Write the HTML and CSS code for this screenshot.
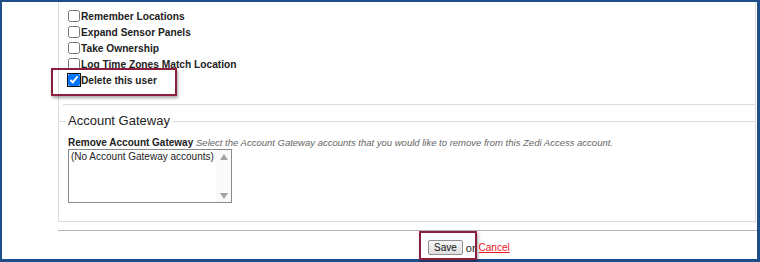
FILE: index.html
```html
<!DOCTYPE html>
<html lang="en">
<head>
    <meta charset="UTF-8">
    <title>Edit User</title>
    <link rel="stylesheet" href="styles.css">
</head>
<body>
    <div class="frame">
        <div class="box">
            <div class="perms">
                <label class="row"><input type="checkbox"> Remember Locations</label>
                <label class="row"><input type="checkbox"> Expand Sensor Panels</label>
                <label class="row"><input type="checkbox"> Take Ownership</label>
                <label class="row"><input type="checkbox"> Log Time Zones Match Location</label>
                <label class="row"><input type="checkbox" class="focused" checked> Delete this user</label>
            </div>
            <fieldset class="gateway">
                <legend>Account Gateway</legend>
                <div class="field-label">
                    <b>Remove Account Gateway</b>
                    <i>Select the Account Gateway accounts that you would like to remove from this Zedi Access account.</i>
                </div>
                <div class="listbox">
                    <div class="list-items">(No Account Gateway accounts)</div>
                    <div class="scroll">
                        <span class="arrow up"></span>
                        <span class="arrow down"></span>
                    </div>
                </div>
            </fieldset>
        </div>
        <div class="actions">
            <button class="save">Save</button>
            <span>or</span>
            <a href="#" class="cancel">Cancel</a>
        </div>
        <!-- annotation boxes -->
        <div class="mark mark-delete"></div>
        <div class="mark mark-save"></div>
    </div>
</body>
</html>
```

FILE: styles.css
```css
body {
    margin: 0;
    font-family: "Liberation Sans", Arial, sans-serif;
    color: #222;
}
.frame {
    position: relative;
    width: 760px;
    height: 262px;
    box-sizing: border-box;
    border: 2px solid #1f4f8b;
    border-right-width: 3px;
    border-bottom-width: 3px;
    background: #fff;
}
.box {
    margin-left: 56px;
    margin-right: 1px;
    height: 220px;
    box-sizing: border-box;
    border: 1px solid #dcdcdc;
    border-top: none;
}
.perms {
    margin-left: 4px;
    padding: 6px 0 16px 4px;
    border-bottom: 1px solid #dcdcdc;
}
.row {
    display: flex;
    align-items: center;
    height: 16px;
    font-size: 10.2px;
    font-weight: bold;
}
.row input {
    width: 12px;
    height: 12px;
    margin: 0 1px 0 1px;
}
.row input.focused {
    outline: 1.5px solid #111;
    outline-offset: 0;
    border-radius: 2px;
}
.gateway {
    margin: 7px 0 0 0;
    padding: 0 0 0 9px;
    border: none;
    border-top: 1px solid #dcdcdc;
}
.gateway legend {
    font-size: 13px;
    line-height: 18px;
    padding: 0 2px;
    margin-left: -2px;
    color: #222;
}
.field-label {
    margin-top: 6px;
    font-size: 10px;
    line-height: 13px;
}
.field-label i {
    font-size: 9.5px;
    color: #666;
}
.listbox {
    display: flex;
    width: 164px;
    height: 54px;
    box-sizing: border-box;
    border: 1px solid #8a8a8a;
}
.list-items {
    flex: 1;
    font-size: 10px;
    padding: 1px 0 0 2px;
}
.scroll {
    width: 15px;
    display: flex;
    flex-direction: column;
    justify-content: space-between;
    align-items: center;
    padding: 4px 0 3px;
    background: #fafafa;
}
.arrow {
    width: 0;
    height: 0;
    border-left: 4px solid transparent;
    border-right: 4px solid transparent;
}
.arrow.up {
    border-bottom: 6px solid #a3a3a3;
}
.arrow.down {
    border-top: 6px solid #a3a3a3;
}
.actions {
    margin: 8px 0 0 56px;
    padding: 9px 0 0 370px;
    border-top: 1px solid #b4b4b4;
    font-size: 11px;
    display: flex;
    align-items: center;
    gap: 3px;
}
.save {
    height: 15px;
    padding: 0 5px;
    font-family: inherit;
    font-size: 10px;
    color: #111;
    border: 1px solid #8f8f8f;
    border-radius: 2px;
    background: linear-gradient(#f7f7f7, #dedede);
}
.cancel {
    color: #e8141c;
    font-size: 10px;
}
.mark {
    position: absolute;
    border: 2px solid #8a1f3e;
    box-shadow: 1px 2px 3px rgba(0, 0, 0, 0.35);
}
.mark-delete {
    left: 49px;
    top: 66px;
    width: 122px;
    height: 24px;
}
.mark-save {
    left: 417px;
    top: 229px;
    width: 54px;
    height: 25px;
}
```
